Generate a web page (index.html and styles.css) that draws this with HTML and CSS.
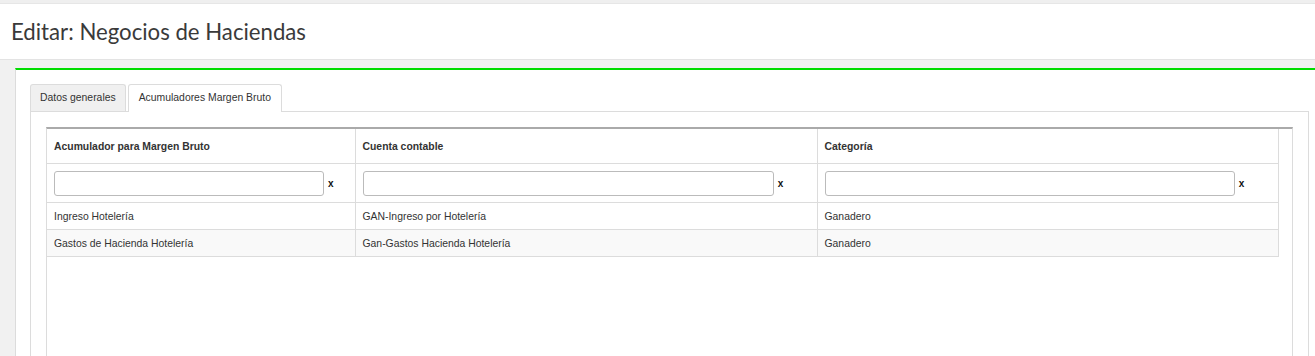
FILE: index.html
```html
<!DOCTYPE html>
<html lang="es">
<head>
  <meta charset="UTF-8" />
  <meta name="viewport" content="width=device-width, initial-scale=1.0"/>
  <title>Editar: Negocios de Haciendas</title>
  <link rel="stylesheet" href="styles.css">
</head>
<body>
  <div class="topbar"></div>

  <div class="page-header">
    <h1>Editar: Negocios de Haciendas</h1>
  </div>

  <div class="content">
    <div class="box">
      <ul class="tabs">
        <li class="tab">Datos generales</li>
        <li class="tab active">Acumuladores Margen Bruto</li>
      </ul>

      <div class="tab-content">
        <div class="grid-wrap">
          <table class="grid">
            <colgroup>
              <col class="c1">
              <col class="c2">
              <col class="c3">
            </colgroup>
            <thead>
              <tr class="head-row">
                <th>Acumulador para Margen Bruto</th>
                <th>Cuenta contable</th>
                <th>Categoría</th>
              </tr>
              <tr class="filter-row">
                <td><div class="filter"><input type="text"><span class="clear">x</span></div></td>
                <td><div class="filter"><input type="text"><span class="clear">x</span></div></td>
                <td><div class="filter"><input type="text"><span class="clear">x</span></div></td>
              </tr>
            </thead>
            <tbody>
              <tr>
                <td>Ingreso Hotelería</td>
                <td>GAN-Ingreso por Hotelería</td>
                <td>Ganadero</td>
              </tr>
              <tr class="alt">
                <td>Gastos de Hacienda Hotelería</td>
                <td>Gan-Gastos Hacienda Hotelería</td>
                <td>Ganadero</td>
              </tr>
            </tbody>
          </table>
        </div>
      </div>
    </div>
  </div>
</body>
</html>
```

FILE: styles.css
```css
html, body {
  margin: 0;
  padding: 0;
  background: #f1f1f1;
  height: 100vh;
  overflow: hidden;
  font-family: "Liberation Sans", Arial, sans-serif;
  color: #333;
}

.topbar {
  height: 3px;
  background: #efefef;
}

.page-header {
  height: 55px;
  background: #fff;
  border-top: 1px solid #e6e6e6;
  border-bottom: 1px solid #e3e3e3;
  display: flex;
  align-items: center;
}

.page-header h1 {
  margin: 0 0 0 11px;
  font-family: Lato, "Liberation Sans", sans-serif;
  font-weight: 400;
  font-size: 22.2px;
  color: #3a3a3a;
}

.content {
  padding: 8px 0 0 15px;
}

.box {
  background: #fff;
  border-top: 2px solid #00dd00;
  border-left: 1px solid #dcdcdc;
  padding: 14px 6px 0 14px;
  height: 286px;
  overflow: hidden;
}

.tabs {
  list-style: none;
  margin: 0;
  padding: 0;
  display: flex;
  gap: 2px;
  position: relative;
  z-index: 1;
}

.tab {
  height: 26px;
  line-height: 26px;
  padding: 0 9px;
  font-size: 10.4px;
  color: #333;
  background: #f0f0f0;
  border: 1px solid #dcdcdc;
  border-bottom: none;
  border-radius: 3px 3px 0 0;
}

.tab.active {
  background: #fff;
  height: 27px;
  padding: 0 10px;
}

.tab-content {
  border: 1px solid #dcdcdc;
  margin-top: -1px;
  padding: 15px 15px 0 15px;
  height: 300px;
}

.grid-wrap {
  border-top: 2px solid #aaa;
  border-left: 1px solid #dcdcdc;
  border-right: 1px solid #dcdcdc;
  height: 300px;
}

.grid {
  border-collapse: collapse;
  width: 1231px;
  table-layout: fixed;
  font-size: 10.4px;
  color: #333;
}

.grid .c1 { width: 308px; }
.grid .c2 { width: 462px; }
.grid .c3 { width: 461px; }

.grid th,
.grid td {
  border-right: 1px solid #dcdcdc;
  border-bottom: 1px solid #dcdcdc;
  padding: 0 7px;
  text-align: left;
}

.head-row th {
  height: 34px;
  font-weight: 700;
}

.filter-row td {
  height: 38px;
}

.filter {
  display: flex;
  align-items: center;
}

.filter input {
  width: 92%;
  height: 25px;
  box-sizing: border-box;
  border: 1px solid #bbb;
  border-radius: 3px;
  margin: 0;
  padding: 0 4px;
}

.clear {
  margin-left: 4px;
  font-weight: 700;
  font-size: 10px;
  color: #111;
}

.grid tbody td {
  height: 26px;
}

.grid tr.alt td {
  background: #f9f9f9;
}
```
